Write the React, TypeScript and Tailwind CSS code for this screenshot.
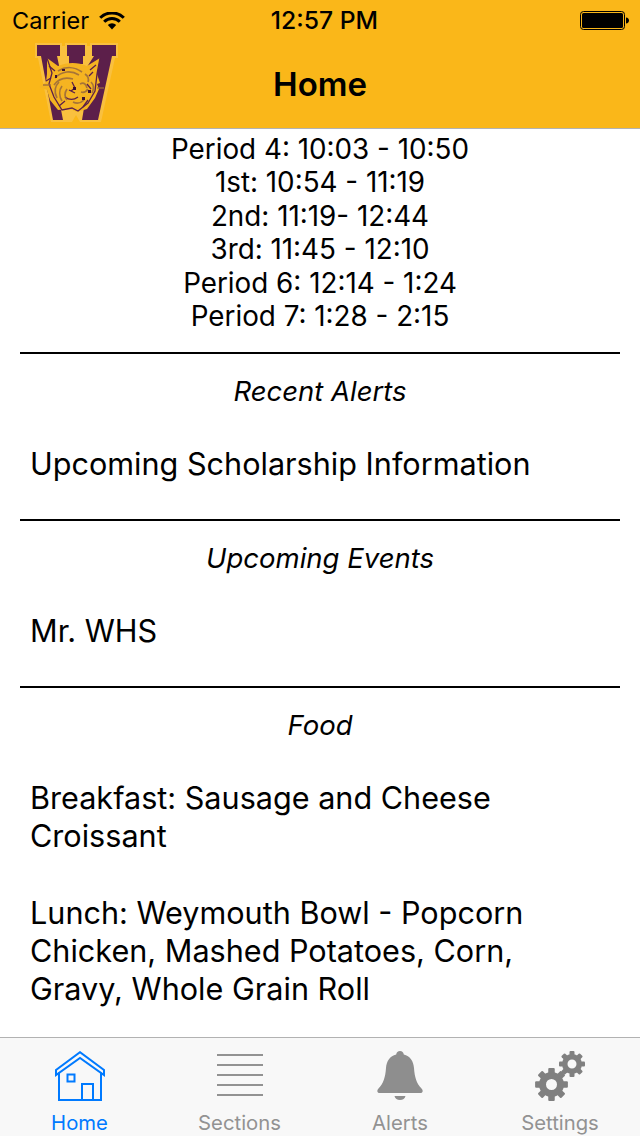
const schedule = [
  "Period 4: 10:03 - 10:50",
  "1st: 10:54 - 11:19",
  "2nd: 11:19- 12:44",
  "3rd: 11:45 - 12:10",
  "Period 6: 12:14 - 1:24",
  "Period 7: 1:28 - 2:15",
];

function WifiIcon() {
  return (
    <svg width="26" height="18" viewBox="0 0 26 18" className="ml-[10px]">
      <path d="M13 17.500 8.800 13a6 6 0 0 1 8.400 0Z" fill="#000" />
      <path d="M5.200 9.800a11 11 0 0 1 15.600 0" fill="none" stroke="#000" strokeWidth="3" />
      <path d="M1.200 5.800a16.700 16.700 0 0 1 23.600 0" fill="none" stroke="#000" strokeWidth="3" />
    </svg>
  );
}

function BatteryIcon() {
  return (
    <svg width="49" height="20" viewBox="0 0 49 20">
      <rect x="0.5" y="0.5" width="44" height="18" rx="3" fill="none" stroke="#000" strokeWidth="1" />
      <rect x="2" y="2" width="41" height="15" rx="1.500" fill="#000" />
      <path d="M46 6.500c2 .3 3 1.400 3 3s-1 2.700-3 3Z" fill="#000" />
    </svg>
  );
}

function Logo() {
  return (
    <svg width="100" height="90" viewBox="0 0 100 90" className="blur-[0.6px]">
      <path
        d="M10 5h27v3h3V5h22v3h3V5h28v15h-3L76 84H55l-4-7-4 7H26L13 20h-3Z"
        fill="#f9cd6e"
        opacity="0.45"
      />
      <path d="M12 7h23v11h-3l3 14-4 14 7 36H28L16 18h-4Z" fill="#5c1f4a" />
      <path d="M42 7h18v11h-2v8H44v-8h-2Z" fill="#5c1f4a" />
      <path d="M67 7h24v11h-4L73 82H57l6-36-3-14 9-14h-2Z" fill="#5c1f4a" />
      <path
        d="M22 20 33 28c9-4 20-4 29 0l13-8-3 16 3 9-3 1 2 5-4 9-8 11-10 3-7-3-12 1-8-10-3-10-8-3 7-5 1-8Z"
        fill="#f5b421"
      />
      <g fill="none" stroke="#5c1f4a" strokeWidth="1.300">
        <path d="M22 20 27 35 24 46 29 59 37 72 47 70 53 73 63 65 70 53 72 36 75 20" />
        <path d="M24 28l6 5M71 27l-6 5M26 40l-5 3M34 68l6-5M58 69l5-7" />
        <path d="M47 44l3 6-4 3M44 52l6 3M53 59c-4 3-9 3-13 0M62 46l4 5M64 38l4-4" />
      </g>
      <g fill="none" stroke="#9a6a3c" strokeWidth="1.700" opacity="0.85">
        <path d="M33 33c8-5 17-4 24 1M30 40c7-7 16-8 24-3M29 47c5-7 12-8 19-6" />
        <path d="M32 60c-3-6-2-12 2-16M37 63c-3-5-3-11 0-15M42 62c-3-4-2-8 0-11" />
        <path d="M55 46c4-2 6 0 7 4M56 54c3 1 5 0 7-3M60 36c3 2 4 5 3 8M48 64c4 2 8 1 11-2" />
        <path d="M66 44c3 3 3 7 1 11M18 47h8M72 50h7" />
      </g>
      <path d="M48 49h3v3h-3ZM37 31h3v2h-3ZM57 59h3v3h-3ZM30 37h2v3h-2ZM63 52h3v3h-3Z" fill="#3a1030" />
    </svg>
  );
}

function HomeIcon() {
  return (
    <svg width="50" height="50" viewBox="0 0 50 50" fill="none" stroke="#007aff" strokeWidth="2">
      <path d="M1 24v-5L25 1.200 49 19v5L25 7Z" />
      <path d="M4 21.500V49h42V21.500" />
      <path d="M27 49V33h11v16" />
      <rect x="12.500" y="23.500" width="7" height="7" />
    </svg>
  );
}

function SectionsIcon() {
  return (
    <svg width="46" height="44" viewBox="0 0 46 44" fill="#929292">
      <rect y="0" width="46" height="2" />
      <rect y="10" width="46" height="2" />
      <rect y="20" width="46" height="2" />
      <rect y="30" width="46" height="2" />
      <rect y="40" width="46" height="2" />
    </svg>
  );
}

function BellIcon() {
  return (
    <svg width="46" height="50" viewBox="0 0 46 50" fill="#8e8e8e">
      <path d="M23 0c2.200 0 3.500 1.200 3.800 3.500C33 5 36.500 10 37 17c.6 9 2.500 15.500 7.500 20.500 2 2 1.500 4.500-1.500 4.500H3c-3 0-3.500-2.500-1.500-4.500C6.500 32.500 8.400 26 9 17c.5-7 4-12 10.200-13.500C19.500 1.200 20.800 0 23 0Z" />
      <path d="M17.500 45h11c-.6 2.500-2.600 4-5.500 4s-4.900-1.500-5.500-4Z" />
    </svg>
  );
}

function Gear({ cx, cy, r, hole, teeth, toothW }: { cx: number; cy: number; r: number; hole: number; teeth: number; toothW: number }) {
  return (
    <g>
      {Array.from({ length: teeth }).map((_, i) => (
        <rect
          key={i}
          x={cx - toothW / 2}
          y={cy - r - toothW * 0.6}
          width={toothW}
          height={toothW}
          rx="1"
          fill="#808080"
          transform={`rotate(${(360 / teeth) * i} ${cx} ${cy})`}
        />
      ))}
      <circle cx={cx} cy={cy} r={(r + hole) / 2} fill="none" stroke="#808080" strokeWidth={r - hole} />
    </g>
  );
}

function GearsIcon() {
  return (
    <svg width="50" height="50" viewBox="0 0 50 50">
      <Gear cx={16.500} cy={33.500} r={12.500} hole={5.500} teeth={8} toothW={6.500} />
      <Gear cx={37} cy={13} r={10} hole={4.500} teeth={8} toothW={5} />
    </svg>
  );
}

function Tab({ label, active, width, children }: { label: string; active?: boolean; width: string; children: React.ReactNode }) {
  return (
    <div className={`flex flex-col items-center ${width}`}>
      <div className="flex h-[54px] items-center justify-center">{children}</div>
      <span className={`mt-[7px] text-[20.300px] leading-[26px] ${active ? "text-[#007aff]" : "text-[#929292]"}`}>{label}</span>
    </div>
  );
}

export default function App() {
  return (
    <div className="flex h-[1136px] w-[640px] flex-col overflow-hidden bg-white font-['Inter','Liberation_Sans',sans-serif] text-black">
      <header className="h-[129px] shrink-0 border-b border-[#b2b2b2] bg-[#fab719]">
        <div className="flex h-[41px] items-center justify-between pl-[12px] pr-[11px]">
          <div className="flex w-[208px] items-center text-[23.500px] leading-none">
            Carrier
            <WifiIcon />
          </div>
          <div className="text-[24.700px] font-medium leading-none">12:57 PM</div>
          <div className="flex w-[200px] justify-end">
            <BatteryIcon />
          </div>
        </div>
        <div className="relative flex h-[87px] items-center justify-center">
          <div className="absolute left-[25px] top-[-3px]">
            <Logo />
          </div>
          <h1 className="text-[33px] font-semibold leading-none">Home</h1>
        </div>
      </header>

      <main className="flex-1 overflow-hidden px-[20px]">
        <div className="pt-[4px] pb-[19px] text-center text-[27.800px] leading-[33.400px]">
          {schedule.map((row) => (
            <div key={row}>{row}</div>
          ))}
        </div>

        <section className="border-t-2 border-black">
          <h2 className="pt-[21px] text-center text-[27.500px] italic leading-[33px]">Recent Alerts</h2>
          <p className="px-[10px] pt-[37px] pb-[36px] text-[30.600px] leading-[38px]">Upcoming Scholarship Information</p>
        </section>

        <section className="border-t-2 border-black">
          <h2 className="pt-[21px] text-center text-[27.500px] italic leading-[33px]">Upcoming Events</h2>
          <p className="px-[10px] pt-[37px] pb-[36px] text-[30.600px] leading-[38px]">Mr. WHS</p>
        </section>

        <section className="border-t-2 border-black">
          <h2 className="pt-[21px] text-center text-[27.500px] italic leading-[33px]">Food</h2>
          <div className="px-[10px] pt-[37px] text-[30.600px] leading-[38px]">
            <p>Breakfast: Sausage and Cheese Croissant</p>
            <p className="mt-[39px]">Lunch: Weymouth Bowl - Popcorn Chicken, Mashed Potatoes, Corn, Gravy, Whole Grain Roll</p>
          </div>
        </section>
      </main>

      <nav className="flex h-[99px] shrink-0 items-start border-t border-[#b2b2b2] bg-[#f8f8f8] pt-[11px]">
        <Tab label="Home" active width="w-[159px]">
          <HomeIcon />
        </Tab>
        <Tab label="Sections" width="w-[161px]">
          <SectionsIcon />
        </Tab>
        <Tab label="Alerts" width="w-[160px]">
          <BellIcon />
        </Tab>
        <Tab label="Settings" width="w-[160px]">
          <GearsIcon />
        </Tab>
      </nav>
    </div>
  );
}
